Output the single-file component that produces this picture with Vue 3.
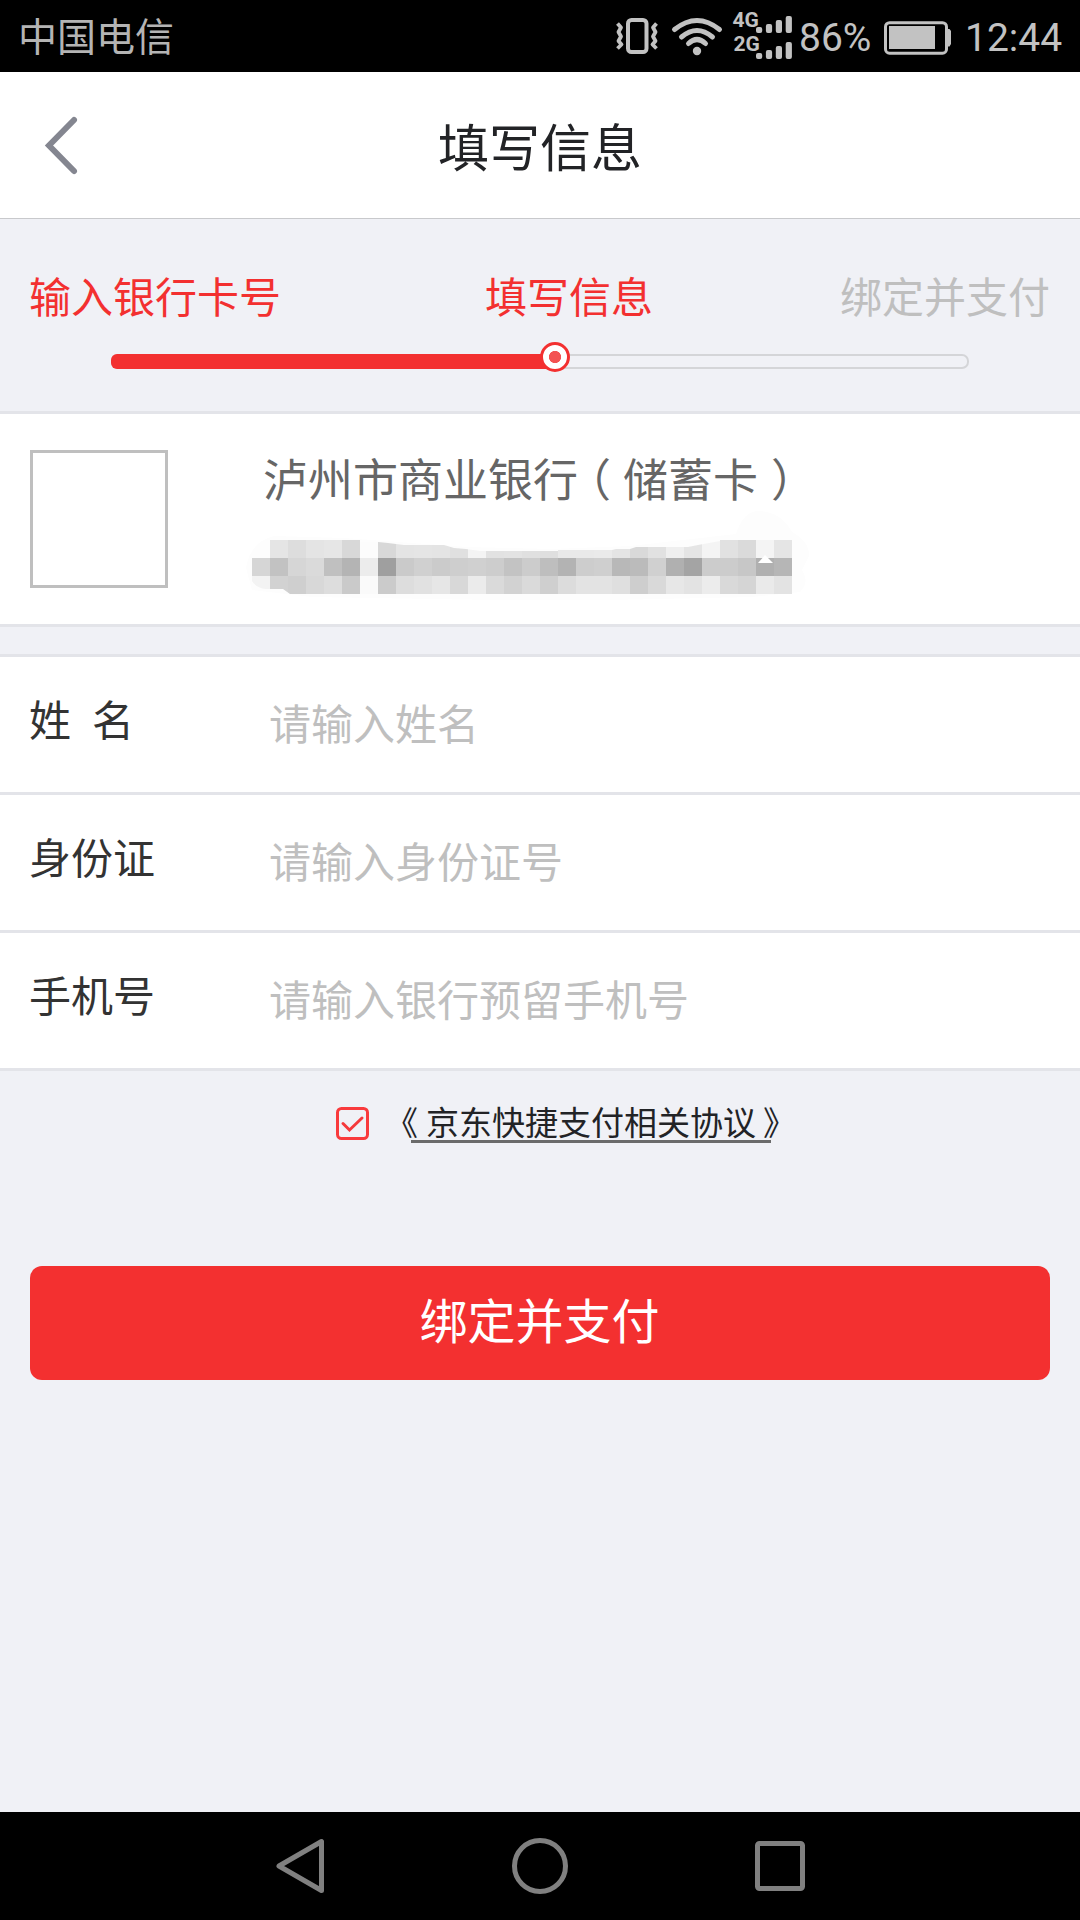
<template>
  <div class="page">
    <div class="status-bar">
      <span class="carrier">中国电信</span>
      <svg class="status-icons" width="200" height="72" viewBox="0 0 200 72">
        <!-- 振动 -->
        <rect x="28" y="20" width="18.5" height="32" rx="3.5" fill="none" stroke="#c2c2c2" stroke-width="4" />
        <g fill="none" stroke="#c2c2c2" stroke-width="3.8" stroke-linejoin="round">
          <path d="M17.5 23.5l3.5 4-2.5 4.500 2.500 4.500-2.500 4.500 3 3.500-4 4" />
          <path d="M56.500 23.500l-3.500 4 2.500 4.500-2.500 4.500 2.500 4.500-3 3.500 4 4" />
        </g>
        <!-- Wi-Fi -->
        <g fill="none" stroke="#c2c2c2" stroke-width="5" stroke-linecap="round">
          <path d="M74.500 29.500Q97 11.500 119.500 29.500" />
          <path d="M81.500 37Q97 24 112.500 37" />
          <path d="M88.500 43.500Q97 35.500 105.500 43.500" />
        </g>
        <circle cx="97" cy="51" r="4.200" fill="#c2c2c2" />
        <!-- 双卡信号 -->
        <g class="network">
          <text x="132.500" y="27">4G</text>
          <text x="133.500" y="51">2G</text>
        </g>
        <g fill="#c2c2c2">
          <rect v-for="bar in signalBars" :key="bar.key" :x="bar.x" :y="bar.y" width="6.200" :height="bar.height" rx="2" />
        </g>
      </svg>
      <span class="battery-text">86%</span>
      <svg class="battery" width="68" height="34" viewBox="0 0 68 34">
        <rect x="1.500" y="1.700" width="61" height="30.500" rx="4" fill="none" stroke="#c2c2c2" stroke-width="3" />
        <rect x="5" y="5" width="46" height="23" fill="#c2c2c2" />
        <path d="M63 8h2.500l1.500 2v13l-1.500 2.500H63z" fill="#c2c2c2" />
      </svg>
      <span class="clock">12:44</span>
    </div>

    <header class="header">
      <svg class="back" width="40" height="64" viewBox="0 0 40 64">
        <path d="M33 7L8 32.500l25 25.500" fill="none" stroke="#848690" stroke-width="6" stroke-linecap="round" />
      </svg>
      <h1>填写信息</h1>
    </header>

    <section class="steps">
      <div class="step-names">
        <span>输入银行卡号</span>
        <span>填写信息</span>
        <span class="todo">绑定并支付</span>
      </div>
      <div class="track">
        <div class="track-done"></div>
        <i class="knob"></i>
      </div>
    </section>

    <section class="bank">
      <div class="bank-logo"></div>
      <div class="bank-info">
        <div class="bank-name">泸州市商业银行<span class="paren-left">（</span>储蓄卡<span class="paren-right">）</span></div>
        <!-- 卡号打码 -->
        <svg class="mosaic" width="576" height="86" viewBox="-6 -30 576 86">
          <defs>
            <clipPath id="mosaic-shape">
              <path d="M0 18H18V0H108V2H126L136 3 152 5H192L202 8 214 9 228 11H306V10H360L364 9H378L384 7H436L446 5 468 1V0H540V54H38L31 49H14Q4 48 0 41Z" />
            </clipPath>
          </defs>
          <path d="M-6 28Q-2 2 22-4L92-2 214 7 300 9 378 6 484-6Q490-26 504-29 528-30 540-8 558 2 557 16L550 30Q558 42 548 52L500 57 360 60 240 60 60 57 0 50Z" fill="#fdfdfd" />
          <g clip-path="url(#mosaic-shape)" shape-rendering="crispEdges">
            <rect v-for="cell in mosaicCells" :key="cell.key" :x="cell.x" :y="cell.y" width="18" height="18" :fill="cell.color" />
          </g>
          <path d="M506 23l7-8 8 8z" fill="#fff" />
        </svg>
      </div>
    </section>

    <section class="form">
      <label v-for="field in fields" :key="field.label" class="row">
        <span class="row-label">
          <template v-if="field.spaced">姓<i class="space"></i>名</template>
          <template v-else>{{ field.label }}</template>
        </span>
        <input v-model="field.value" type="text" :placeholder="field.placeholder" />
      </label>
    </section>

    <div class="agreement">
      <svg width="33" height="33" viewBox="0 0 33 33">
        <rect x="1.500" y="1.500" width="30" height="30" rx="4" fill="none" stroke="#f93a3c" stroke-width="3" />
        <path d="M7 16.500l6.500 6.500L26 11" fill="none" stroke="#f5393b" stroke-width="3" stroke-linecap="round" />
      </svg>
      <a class="agreement-link"><span class="quote-left">《</span>京东快捷支付相关协议<span class="quote-right">》</span></a>
    </div>

    <button class="submit" type="button">绑定并支付</button>

    <nav class="nav-bar">
      <svg width="50" height="58" viewBox="0 0 50 58">
        <path d="M46.500 4.500v49L4 29z" />
      </svg>
      <svg width="58" height="58" viewBox="0 0 58 58">
        <circle cx="29" cy="29" r="25.500" />
      </svg>
      <svg width="50" height="58" viewBox="0 0 50 58">
        <rect x="2.500" y="6.500" width="45" height="45" rx="2" />
      </svg>
    </nav>
  </div>
</template>

<script setup>
import { ref } from 'vue';

const fields = ref([
  { label: '姓名', spaced: true, placeholder: '请输入姓名', value: '' },
  { label: '身份证', placeholder: '请输入身份证号', value: '' },
  { label: '手机号', placeholder: '请输入银行预留手机号', value: '' },
]);

const signalBars = [33, 59].flatMap((bottom) =>
  [6, 9, 13, 17].map((height, i) => ({
    key: `${bottom}-${i}`,
    x: 156 + i * 9.9,
    y: bottom - height,
    height,
  }))
);

// 每行 30 个灰度块，两位十六进制表示一块
const mosaicRows = [
  'ffe5dde4e6d8fcd8e4e5e4e0f4e2e3e0dfe9e9eae4d9e1efe5f4e1daf4e5',
  'd6c2d6dac0b4ec9fcad0cbced0cdc3ccbeb3cdcfb8bbd0b0a4ccccc7b0b6',
  'f3d2cfd8ddcafacbdde1e6d8ebdad2dacfdce3e3dfced9e7e3ecd9d5eae3',
];

const mosaicCells = mosaicRows.flatMap((row, r) =>
  row.match(/../g).map((gray, c) => ({
    key: `${r}-${c}`,
    x: c * 18,
    y: r * 18,
    color: `#${gray}${gray}${gray}`,
  }))
);
</script>

<style>
body {
  margin: 0;
  background: #F0F1F6;
}
</style>

<style scoped>
.page {
  display: flex;
  flex-direction: column;
  box-sizing: border-box;
  width: 1080px;
  height: 1920px;
  overflow: hidden;
  background: #F0F1F6;
  color: #333333;
  font-family: "Noto Sans CJK SC", sans-serif;
}

.page svg {
  display: block;
  flex: none;
}

.status-bar {
  display: flex;
  align-items: center;
  height: 72px;
  padding: 0 17px 0 18px;
  background: #000000;
  color: #C2C2C2;
  font: 400 39px/72px Roboto, sans-serif;
}

.carrier {
  height: 72px;
  margin-right: auto;
  font: 400 39px/69px "Noto Sans CJK SC", sans-serif;
  color: #B4B4B4;
}

.network {
  fill: #C2C2C2;
  font: 700 21px Roboto, sans-serif;
}

.battery-text {
  width: 84px;
  height: 72px;
  padding-top: 4px;
  box-sizing: border-box;
  line-height: 68px;
  text-indent: -1px;
}

.battery {
  margin-top: 3px;
}

.clock {
  width: 98px;
  height: 72px;
  margin-left: 13px;
  padding-top: 4px;
  box-sizing: border-box;
  line-height: 68px;
}

.header {
  display: grid;
  grid-template-columns: 200px 1fr 200px;
  height: 146px;
  border-bottom: 1px solid #C8C9CC;
  background: #FFFFFF;
}

.back {
  margin: 41px 0 0 41px;
}

.header h1 {
  margin: 0;
  color: #222326;
  font-size: 51px;
  font-weight: 400;
  line-height: 146px;
  text-align: center;
}

.steps {
  box-sizing: border-box;
  height: 192px;
  padding: 45px 30px 0;
}

.step-names {
  display: grid;
  grid-template-columns: 456px 1fr auto;
  height: 90px;
  margin-left: -1px;
  color: #F33030;
  font-size: 42px;
  line-height: 62px;
}

.step-names .todo {
  color: #BFBFBF;
}

.track {
  position: relative;
  box-sizing: border-box;
  width: 858px;
  height: 15px;
  margin-left: 81px;
  border: 2px solid #D4D5D8;
  border-radius: 7px;
}

.track-done {
  width: 444px;
  height: 15px;
  margin: -2px;
  border-radius: 6px 0 0 6px;
  background: #F33030;
}

.knob {
  position: absolute;
  left: 427px;
  top: -14px;
  box-sizing: border-box;
  width: 30px;
  height: 30px;
  border: 3px solid #F33030;
  border-radius: 50%;
  background: radial-gradient(circle, #F35252 5.7px, #FFFFFF 6.5px);
}

.bank {
  display: flex;
  box-sizing: border-box;
  height: 216px;
  padding: 36px 30px 0;
  border: solid #E3E4E9;
  border-width: 3px 0;
  background: #FFFFFF;
}

.bank-logo {
  flex: none;
  box-sizing: border-box;
  width: 138px;
  height: 138px;
  border: 3px solid #BFBFBF;
}

.bank-info {
  padding-left: 78px;
}

.bank-name {
  height: 60px;
  padding-left: 17px;
  color: #666666;
  font-size: 45px;
  line-height: 56px;
  white-space: nowrap;
}

/* 括号用半宽字形，两侧留白使其居中 */
.paren-left,
.paren-right,
.quote-left,
.quote-right {
  font-feature-settings: "halt";
}

.paren-left {
  margin: 0 12px 0 10.5px;
}

.paren-right {
  margin-left: 13px;
}

.mosaic {
  overflow: visible;
}

.form {
  margin-top: 27px;
  border-top: 3px solid #E3E4E9;
}

.row {
  display: flex;
  box-sizing: border-box;
  height: 138px;
  padding: 0 30px 0 29px;
  border-bottom: 3px solid #E3E4E9;
  background: #FFFFFF;
  font-size: 42px;
}

.row-label {
  width: 240px;
  line-height: 122px;
}

.space {
  display: inline-block;
  width: 21px;
}

.row input {
  flex: 1;
  min-width: 0;
  height: 128px;
  padding: 0;
  border: 0;
  outline: 0;
  background: transparent;
  color: #333333;
  font: inherit;
}

.row input::placeholder {
  color: #BFBFBF;
  opacity: 1;
}

.agreement {
  display: flex;
  align-items: flex-start;
  height: 159px;
  padding: 36px 0 0 336px;
}

.agreement-link {
  width: 360px;
  height: 33px;
  margin-left: 42px;
  border-bottom: 3px solid #6B6B6B;
  color: #222326;
  font-size: 33px;
  line-height: 29px;
  white-space: nowrap;
}

/* 书名号伸出下划线两端 */
.quote-left {
  margin: 0 8px 0 -9.5px;
}

.quote-right {
  margin-left: 7px;
}

.submit {
  height: 114px;
  margin: 0 30px;
  padding: 0 1px 10px 0;
  border: 0;
  border-radius: 12px;
  background: #F33030;
  color: #FFFFFF;
  font: 400 48px/104px "Noto Sans CJK SC", sans-serif;
}

.nav-bar {
  display: flex;
  align-items: center;
  justify-content: space-between;
  box-sizing: border-box;
  height: 108px;
  margin-top: auto;
  padding: 0 275px;
  background: #000000;
}

.nav-bar svg {
  fill: none;
  stroke: #808080;
  stroke-width: 5;
  stroke-linejoin: round;
}
</style>
